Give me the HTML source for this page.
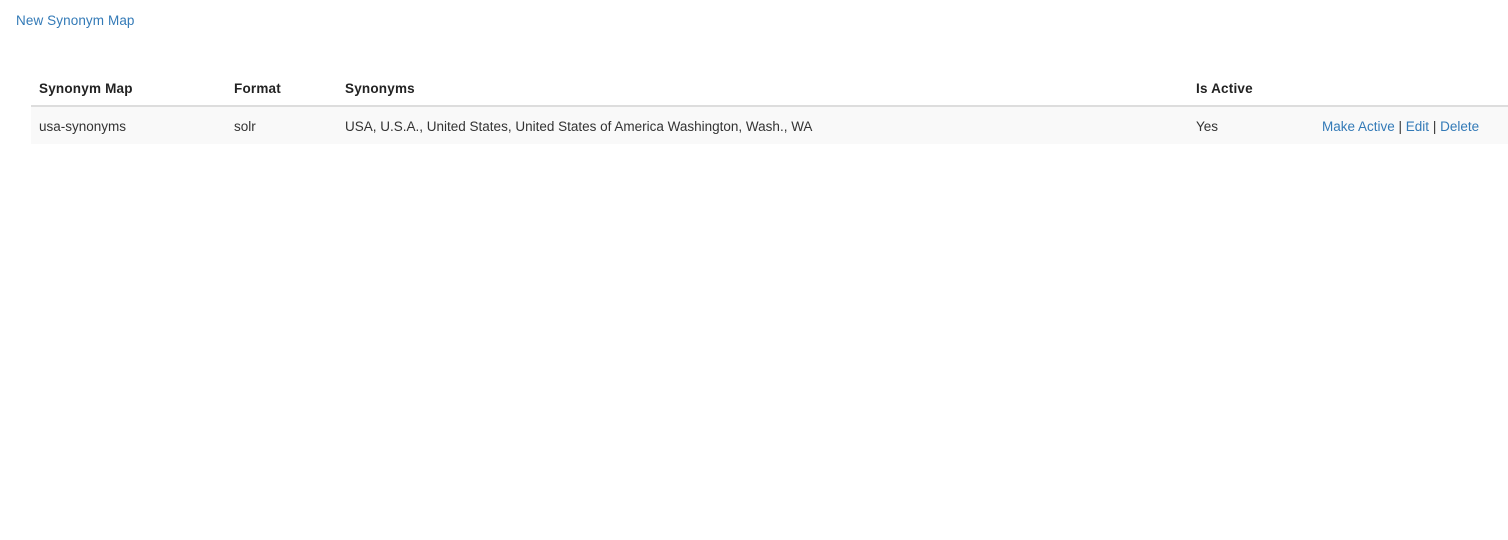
<!DOCTYPE html>
<html><head><style>
body{margin:0;background:#fff;font-family:"Liberation Sans",sans-serif;font-size:13.5px;color:#333;width:1508px;height:540px;overflow:hidden;position:relative}
a{color:#337ab7;text-decoration:none}
.t{position:absolute;white-space:nowrap;line-height:16px}
.h{font-weight:bold;color:#222;font-size:13.5px;letter-spacing:0.2px}
</style></head><body>
<a class="t" style="left:16px;top:13px;letter-spacing:0.1px" href="#">New Synonym Map</a>
<div style="position:absolute;left:31px;top:105px;width:1477px;height:2px;background:#ddd"></div>
<div style="position:absolute;left:31px;top:107px;width:1477px;height:37px;background:#f9f9f9"></div>
<div class="t h" style="left:39px;top:81px">Synonym Map</div>
<div class="t h" style="left:234px;top:81px">Format</div>
<div class="t h" style="left:345px;top:81px">Synonyms</div>
<div class="t h" style="left:1196px;top:81px">Is Active</div>
<div class="t" style="left:39px;top:119px">usa-synonyms</div>
<div class="t" style="left:234px;top:119px">solr</div>
<div class="t" style="left:345px;top:119px;letter-spacing:0px">USA, U.S.A., United States, United States of America Washington, Wash., WA</div>
<div class="t" style="left:1196px;top:119px">Yes</div>
<div class="t" style="left:1322px;top:119px"><a href="#">Make Active</a> | <a href="#">Edit</a> | <a href="#">Delete</a></div>
</body></html>
